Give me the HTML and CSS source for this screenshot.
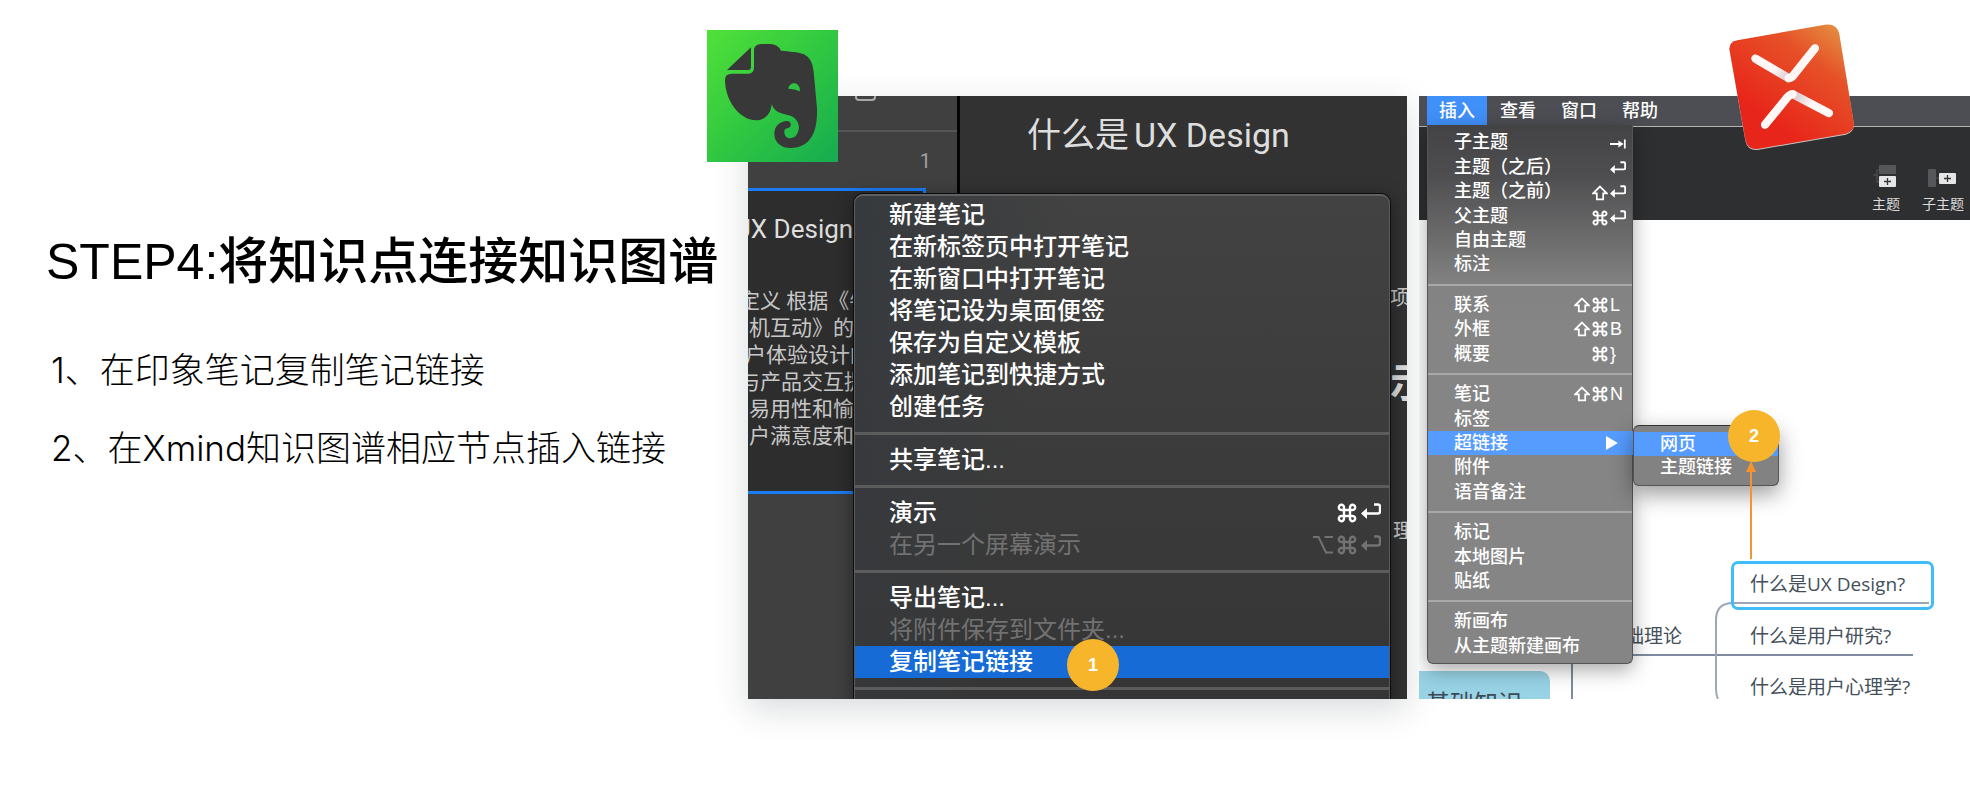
FILE: index.html
```html
<!DOCTYPE html>
<html lang="zh-CN">
<head>
<meta charset="utf-8">
<title>STEP4:将知识点连接知识图谱</title>
<link rel="stylesheet" href="styles.css">
</head>
<body>
<svg class="defs" width="0" height="0" aria-hidden="true">
  <symbol id="k-cmd" viewBox="0 0 20 20"><path d="M7 7H4.6A2.6 2.6 0 1 1 7 4.6V15.4A2.6 2.6 0 1 1 4.6 13H15.4A2.6 2.6 0 1 1 13 15.4V4.6A2.6 2.6 0 1 1 15.4 7Z" fill="none" stroke="currentColor" stroke-width="2.400"/></symbol>
  <symbol id="k-ret" viewBox="0 0 20 20"><path d="M13 1.500H17Q19 1.500 19 3.500V8.500Q19 10.500 17 10.500H5" fill="none" stroke="currentColor" stroke-width="2.400"/><path d="M0 10.500 6 5V16Z" fill="currentColor"/></symbol>
  <symbol id="k-opt" viewBox="0 0 20 20"><path d="M0 2H5.500L13 17.500H20M11.500 2H20" fill="none" stroke="currentColor" stroke-width="2"/></symbol>
  <symbol id="k-shift" viewBox="0 0 20 20"><path d="M10 2 18.500 10.500H14V18H6V10.500H1.500Z" fill="none" stroke="currentColor" stroke-width="2.200"/></symbol>
  <symbol id="k-tab" viewBox="0 0 20 20"><path d="M0 10H13M18.500 4.500V15.500" fill="none" stroke="currentColor" stroke-width="2.200"/><path d="M17 10 10.500 5.500V14.500Z" fill="currentColor"/></symbol>
</svg>

<main class="slide">
  <section class="intro">
    <h1 class="title">STEP4:将知识点连接知识图谱</h1>
    <p class="step">1、在印象笔记复制笔记链接</p>
    <p class="step">2、在Xmind知识图谱相应节点插入链接</p>
  </section>

  <section class="shot notes">
    <svg class="logo-note" viewBox="0 0 393 396" preserveAspectRatio="none" role="img" aria-label="印象笔记">
      <defs><linearGradient id="gn" x1="0" y1="0" x2="1" y2="1"><stop offset="0" stop-color="#50e138"/><stop offset=".5" stop-color="#30c841"/><stop offset="1" stop-color="#16ab50"/></linearGradient></defs>
      <rect width="393" height="396" fill="url(#gn)"/>
      <path d="M132 52V110Q132 120 122 120H60Z" fill="#383838"/>
      <path d="M141 62Q141 42 163 42H190Q212 42 222 62C250 65 270 65 291 73Q316 85 320 125L330 235C332 300 315 354 250 354C220 354 202 335 202 312C202 288 220 273 240 273C255 273 255 293 241 295C229 297 231 308 234 316C240 328 258 326 267 317C278 303 278 286 270 273C258 253 236 257 215 247Q201 241 194 223C192 250 175 271 148 271C100 271 55 215 54 150Q54 131 75 131H124Q141 131 141 112Z" fill="#383838"/>
      <path d="M244 176C247 155 279 152 279 184Q263 176 244 176Z" fill="#2fc143"/>
    </svg>
    <div class="clip">
      <div class="sidebar">
        <div class="side-top"><span class="side-icon"></span></div>
        <div class="side-count">1</div>
        <article class="card">
          <h2 class="card-title">UX Design</h2>
          <p class="line out">定义 根据《牛</p>
          <p class="line">机互动》的</p>
          <p class="line half">户体验设计的</p>
          <p class="line out">与产品交互提</p>
          <p class="line">易用性和愉</p>
          <p class="line">户满意度和</p>
        </article>
      </div>
      <div class="editor">
        <h2 class="doc-title">什么是<span class="latin">UX Design</span></h2>
        <span class="peek p1">项</span>
        <span class="peek p2">示</span>
        <span class="peek p3">理</span>
      </div>
      <div class="menu dark">
        <button class="item">新建笔记</button>
        <button class="item">在新标签页中打开笔记</button>
        <button class="item">在新窗口中打开笔记</button>
        <button class="item">将笔记设为桌面便签</button>
        <button class="item">保存为自定义模板</button>
        <button class="item">添加笔记到快捷方式</button>
        <button class="item">创建任务</button>
        <hr class="sep">
        <button class="item">共享笔记...</button>
        <hr class="sep">
        <button class="item">演示<span class="keys"><svg><use href="#k-cmd"/></svg><svg><use href="#k-ret"/></svg></span></button>
        <button class="item" disabled>在另一个屏幕演示<span class="keys"><svg><use href="#k-opt"/></svg><svg><use href="#k-cmd"/></svg><svg><use href="#k-ret"/></svg></span></button>
        <hr class="sep">
        <button class="item">导出笔记...</button>
        <button class="item" disabled>将附件保存到文件夹...</button>
        <button class="item active">复制笔记链接</button>
        <hr class="sep">
      </div>
      <span class="badge b1">1</span>
    </div>
  </section>

  <section class="shot mind">
    <div class="clip">
      <nav class="menubar">
        <button class="top on">插入</button>
        <button class="top">查看</button>
        <button class="top">窗口</button>
        <button class="top">帮助</button>
      </nav>
      <div class="toolbar">
        <button class="tool">
          <svg width="28" height="24" viewBox="0 0 28 24"><path d="M1 11H5M9 6H5V18H9" fill="none" stroke="#56575a"/><rect x="7" y="1" width="17" height="9" rx="1" fill="#56575a"/><rect x="7" y="12" width="17" height="11" rx="1" fill="#e6e6e6"/><path d="M12 17.500H19M15.500 14V21" stroke="#333" stroke-width="1.300"/></svg>
          主题
        </button>
        <button class="tool">
          <svg width="32" height="24" viewBox="0 0 32 24"><rect x="1" y="5" width="8" height="18" rx="1" fill="#56575a"/><path d="M9 14H12" stroke="#56575a"/><rect x="12" y="9" width="17" height="11" rx="1" fill="#e6e6e6"/><path d="M17 14.500H24M20.500 11V18" stroke="#333" stroke-width="1.300"/></svg>
          子主题
        </button>
      </div>
      <div class="canvas">
        <svg class="wires" width="551" height="479" viewBox="0 0 551 479" fill="none" stroke="#7f8aa0" stroke-width="2">
          <path d="M153 430V479M214 435H494"/>
          <path d="M510 383H314Q297 383 297 400V468Q297 475 299 479" stroke="#9ca6b6"/>
        </svg>
        <span class="root">基础知识</span>
        <span class="node theory">基础理论</span>
        <span class="node sel">什么是UX Design?</span>
        <span class="node n2">什么是用户研究?</span>
        <span class="node n3">什么是用户心理学?</span>
      </div>
      <div class="menu gray main">
        <button class="item">子主题<span class="keys"><svg><use href="#k-tab"/></svg></span></button>
        <button class="item">主题（之后）<span class="keys"><svg><use href="#k-ret"/></svg></span></button>
        <button class="item">主题（之前）<span class="keys"><svg><use href="#k-shift"/></svg><svg><use href="#k-ret"/></svg></span></button>
        <button class="item">父主题<span class="keys"><svg><use href="#k-cmd"/></svg><svg><use href="#k-ret"/></svg></span></button>
        <button class="item">自由主题</button>
        <button class="item">标注</button>
        <hr class="sep">
        <button class="item">联系<span class="keys"><svg><use href="#k-shift"/></svg><svg><use href="#k-cmd"/></svg><span>L</span></span></button>
        <button class="item">外框<span class="keys"><svg><use href="#k-shift"/></svg><svg><use href="#k-cmd"/></svg><span>B</span></span></button>
        <button class="item">概要<span class="keys"><svg><use href="#k-cmd"/></svg><span>}</span></span></button>
        <hr class="sep">
        <button class="item">笔记<span class="keys"><svg><use href="#k-shift"/></svg><svg><use href="#k-cmd"/></svg><span>N</span></span></button>
        <button class="item">标签</button>
        <button class="item active">超链接<span class="more"></span></button>
        <button class="item">附件</button>
        <button class="item">语音备注</button>
        <hr class="sep">
        <button class="item">标记</button>
        <button class="item">本地图片</button>
        <button class="item">贴纸</button>
        <hr class="sep">
        <button class="item">新画布</button>
        <button class="item">从主题新建画布</button>
      </div>
      <div class="menu gray sub">
        <button class="item active">网页</button>
        <button class="item">主题链接</button>
      </div>
      <svg class="arrow" width="12" height="100" viewBox="0 0 12 100"><path d="M6 98V10" stroke="#f5942f" stroke-width="2"/><path d="M6 0 11 11H1Z" fill="#f5942f"/></svg>
      <span class="badge b2">2</span>
    </div>
    <svg class="logo-mind" viewBox="264 38 384 388" role="img" aria-label="Xmind">
      <defs>
        <linearGradient id="gx" x1=".95" y1="0" x2=".35" y2=".8"><stop offset="0" stop-color="#e39a45"/><stop offset=".4" stop-color="#e65128"/><stop offset="1" stop-color="#e8251a"/></linearGradient>
        <linearGradient id="s1" gradientUnits="userSpaceOnUse" x1="400" y1="178" x2="445" y2="210"><stop offset="0" stop-color="#fff7f5"/><stop offset="1" stop-color="#d9c6cc"/></linearGradient>
        <linearGradient id="s2" gradientUnits="userSpaceOnUse" x1="465" y1="248" x2="520" y2="278"><stop offset="0" stop-color="#d9c6cc"/><stop offset="1" stop-color="#fff7f5"/></linearGradient>
      </defs>
      <path d="M268 121Q266 96 292 91L555 45Q590 40 598 72L642 342Q645 365 618 374L352 420Q322 422 316 394Z" fill="#c9c4c2"/>
      <path d="M268 118Q266 95 292 90L555 43Q590 38 598 70L642 340Q645 362 618 371L352 417Q322 419 316 391Z" fill="url(#gx)"/>
      <g fill="none" stroke-width="25" stroke-linecap="round" stroke-linejoin="round">
        <path d="M346 145 446 204" stroke="url(#s1)"/><path d="M446 204Q455 203 463 192L525 114" stroke="#fff7f5"/>
        <path d="M458 252 567 309" stroke="url(#s2)"/><path d="M375 344 440 264Q448 253 458 252" stroke="#fff7f5"/>
      </g>
    </svg>
  </section>
</main>
</body>
</html>
```
FILE: styles.css
```css
* { box-sizing: border-box; }
body {
  margin: 0;
  background: #fff;
  color: #000;
  font-family: "Liberation Sans", "Noto Sans CJK SC", sans-serif;
}
.defs { position: absolute; }
h1, h2, p { margin: 0; font-weight: 400; }
button {
  border: 0;
  margin: 0;
  background: none;
  color: inherit;
  font: inherit;
  text-align: left;
}
.slide {
  display: grid;
  grid-template-columns: minmax(0, 748fr) minmax(0, 671fr) minmax(0, 551fr);
  min-height: 100vh;
  padding: 96px 0 101px;
  overflow: hidden;
}

/* Intro text */
.intro { padding: 136px 0 0 46px; white-space: nowrap; position: relative; z-index: 1; }
.title { font-size: 50px; line-height: 60px; font-weight: 500; margin-bottom: 57px; }
.step {
  padding-left: 5px;
  margin-bottom: 36px;
  font-family: Inter, "Noto Sans CJK SC", sans-serif;
  font-size: 35px;
  line-height: 42px;
  font-weight: 300;
}

/* Screenshot panels */
.shot { position: relative; }
.clip { position: relative; height: 100%; overflow: hidden; }
.notes { margin-right: 12px; }
.notes .clip {
  display: grid;
  grid-template-columns: 212px 1fr;
  background: #323232;
}
.notes::before {
  content: "";
  position: absolute;
  inset: 0;
  box-shadow: 0 10px 32px rgba(40, 50, 60, .18);
}
.logo-note { position: absolute; z-index: 3; left: -41px; top: -66px; width: 131px; height: 132px; }
.logo-mind { position: absolute; z-index: 3; left: 309px; top: -73px; width: 128px; height: 129px; }

.sidebar { background: #404040; border-right: 3px solid #050505; overflow: hidden; font-family: Roboto, "Noto Sans CJK SC", sans-serif; }
.side-top { height: 36px; border-bottom: 2px solid #555; padding-left: 107px; }
.side-icon { display: block; width: 21px; height: 5px; border: 2px solid #a8a8a8; border-top: 0; border-radius: 0 0 4px 4px; }
.side-count { height: 56px; padding: 17px 26px 0 0; font-size: 20px; line-height: 24px; color: #a0a0a0; text-align: right; }
.card {
  width: 178px;
  height: 306px;
  border: 3px solid #1b7cf5;
  border-left: 0;
  background: #2d2d2d;
  white-space: nowrap;
  overflow: hidden;
}
.card-title { margin: 22px 0 43px -14px; color: #dedede; font-size: 26px; line-height: 32px; }
.line { color: #c8c8c8; font-size: 21px; line-height: 27px; padding-left: 1px; }
.line.out { margin-left: -10px; }
.line.half { margin-left: -4px; }
.editor { position: relative; overflow: hidden; }
.doc-title {
  padding: 17px 0 0 67px;
  color: #dedede;
  font-family: Roboto, "Noto Sans CJK SC", sans-serif;
  font-size: 34px;
  line-height: 44px;
  white-space: nowrap;
}
.latin { margin-left: 5px; }
.peek { position: absolute; color: #c8c8c8; font-size: 20px; line-height: 28px; left: 430px; }
.p1 { top: 188px; }
.p2 { top: 262px; font-size: 40px; line-height: 50px; font-weight: 700; color: #dedede; }
.p3 { top: 421px; left: 433px; }

/* Menus */
.menu { position: absolute; display: flex; flex-direction: column; color: #fff; font-weight: 500; }
.item {
  display: flex;
  align-items: center;
  justify-content: space-between;
  white-space: nowrap;
}
.sep { margin: 0; border: 0; }
.keys { display: flex; }
.dark {
  left: 106px;
  right: 17px;
  top: 98px;
  bottom: -8px;
  padding-top: 3px;
  border: 1px solid #5c5c5c;
  border-top: 2px solid #606060;
  border-radius: 9px 9px 0 0;
  background: linear-gradient(100deg, #36393d 0%, rgba(54, 57, 61, 0) 35%), linear-gradient(#424242, #353535);
  box-shadow: 0 0 0 1px #0c0c0c, 0 4px 20px rgba(0, 0, 0, .45);
  font-size: 24px;
}
.dark .item { flex: none; height: 32px; padding: 0 8px 0 34px; line-height: 32px; }
.dark .item:disabled { color: #727272; font-weight: 400; }
.dark .active { background: #166bd6; }
.dark .sep { flex: none; height: 21px; background: linear-gradient(#5c5c5c, #5c5c5c) center / 100% 3px no-repeat; }
.dark .keys { gap: 4px; }
.dark .keys svg { width: 20px; height: 20px; }

.gray { border: 1px solid #555; border-top: 0; font-size: 18px; }
.gray .item { flex: 49 1 0; min-height: 0; padding: 0 4px 0 26px; line-height: 24px; }
.gray .sep { flex: 32 1 0; background: linear-gradient(#a8a8a8, #a8a8a8) center / 100% 2px no-repeat; }
.gray .active { background: #569cff; }
.gray .keys > * { width: 18px; height: 24px; }
.gray .keys svg { width: 16px; height: 16px; margin: 4px 2px 0 0; }
.gray .keys { font-family: "Liberation Sans", sans-serif; font-weight: 400; }
.main {
  left: 8px;
  top: 29px;
  bottom: 35px;
  width: 206px;
  padding: 5px 0;
  border-radius: 0 0 6px 6px;
  background: linear-gradient(#434345, #4e4e50 50px, #828282 160px, #858585 200px);
  box-shadow: 0 6px 20px rgba(0, 0, 0, .35);
}
.main .active { margin-right: -1px; }
.more { border: 7px solid transparent; border-left: 12px solid #fff; border-right: 0; margin-right: 11px; }
.sub {
  left: 214px;
  top: 329px;
  width: 146px;
  height: 61px;
  padding: 6px 0;
  border-top: 1px solid #333;
  border-radius: 6px;
  background: #828282;
  box-shadow: 0 8px 22px rgba(0, 0, 0, .4);
}
.arrow { position: absolute; left: 326px; top: 365px; }

/* Mind map panel */
.mind .clip { display: flex; flex-direction: column; background: #fff; }
.menubar {
  display: flex;
  gap: 1px;
  height: 31px;
  padding-left: 8px;
  background: #4c4e54;
  border-bottom: 1px solid #b4b4b4;
  color: #fff;
  font-size: 18px;
  font-weight: 500;
}
.top { height: 29px; padding: 0 12px; line-height: 30px; }
.top.on { background: #4090fa; }
.toolbar {
  display: flex;
  justify-content: flex-end;
  gap: 22px;
  height: 93px;
  padding: 37px 6px 0 0;
  background: #2e2f31;
}
.tool {
  display: flex;
  flex-direction: column;
  align-items: center;
  gap: 7px;
  padding: 0;
  height: 50px;
  color: #dcdcdc;
  font-size: 14px;
  line-height: 18px;
}
.canvas { position: relative; flex: 1; color: #454f5a; }
.wires { position: absolute; left: 0; top: 0; }
.node {
  position: absolute;
  font-family: "Open Sans", "Noto Sans CJK SC", sans-serif;
  font-size: 19px;
  line-height: 28px;
  font-weight: 400;
  white-space: nowrap;
}
.theory { left: 187px; top: 402px; }
.sel { left: 312px; top: 341px; padding: 6px 26px 9px 16px; border: 3px solid #3fbdfb; border-radius: 7px; }
.n2 { left: 331px; top: 402px; }
.n3 { left: 331px; top: 453px; }
.root {
  position: absolute;
  left: 0;
  top: 451px;
  width: 131px;
  height: 60px;
  padding: 15px 0 0 7px;
  border-radius: 0 10px 0 0;
  background: #98d2e5;
  color: #3c4a56;
  font-size: 24px;
  line-height: 36px;
}

/* Step markers */
.badge {
  position: absolute;
  width: 52px;
  height: 52px;
  border-radius: 50%;
  background: #f7b52c;
  color: #fff;
  font-size: 18px;
  font-weight: 700;
  line-height: 52px;
  text-align: center;
}
.b1 { left: 319px; top: 543px; }
.b2 { left: 309px; top: 314px; }
```
